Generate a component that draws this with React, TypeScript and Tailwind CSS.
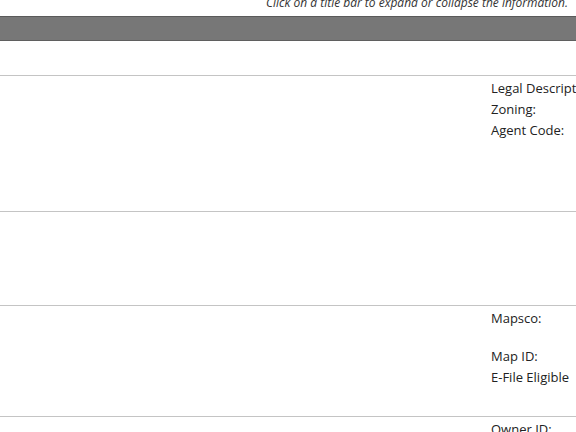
import React from "react";

const font = { fontFamily: '"Open Sans", "Segoe UI", sans-serif' };

function Field({ label }: { label: string }) {
  return <div className="h-[21px] leading-[21px] whitespace-nowrap">{label}</div>;
}

export default function App() {
  return (
    <div className="w-full h-[432px] overflow-hidden bg-white text-[#222]" style={font}>
      <div className="h-[16px] overflow-hidden flex justify-end pr-[8px]">
        <p className="italic text-[12px] leading-[12px] -mt-[3px] text-[#333]">
          Click on a title bar to expand or collapse the information.
        </p>
      </div>
      <div className="h-[25px] bg-[#777777] border-t border-b border-t-[#5a5a5a] border-b-[#5f5f5f]" />
      <div className="h-[34px]" />
      <section className="h-[136px] border-t border-[#c4c4c4] grid grid-cols-[491px_1fr] pt-[2px] text-[13px]">
        <div />
        <div className="flex flex-col">
          <Field label="Legal Description:" />
          <Field label="Zoning:" />
          <Field label="Agent Code:" />
        </div>
      </section>
      <section className="h-[94px] border-t border-[#c4c4c4]" />
      <section className="h-[111px] border-t border-[#c4c4c4] grid grid-cols-[491px_1fr] pt-[2px] text-[13px]">
        <div />
        <div className="flex flex-col">
          <Field label="Mapsco:" />
          <div className="h-[17px]" />
          <Field label="Map ID:" />
          <Field label="E-File Eligible" />
        </div>
      </section>
      <section className="border-t border-[#c4c4c4] grid grid-cols-[491px_1fr] pt-[2px] text-[13px]">
        <div />
        <div className="flex flex-col">
          <Field label="Owner ID:" />
        </div>
      </section>
    </div>
  );
}
